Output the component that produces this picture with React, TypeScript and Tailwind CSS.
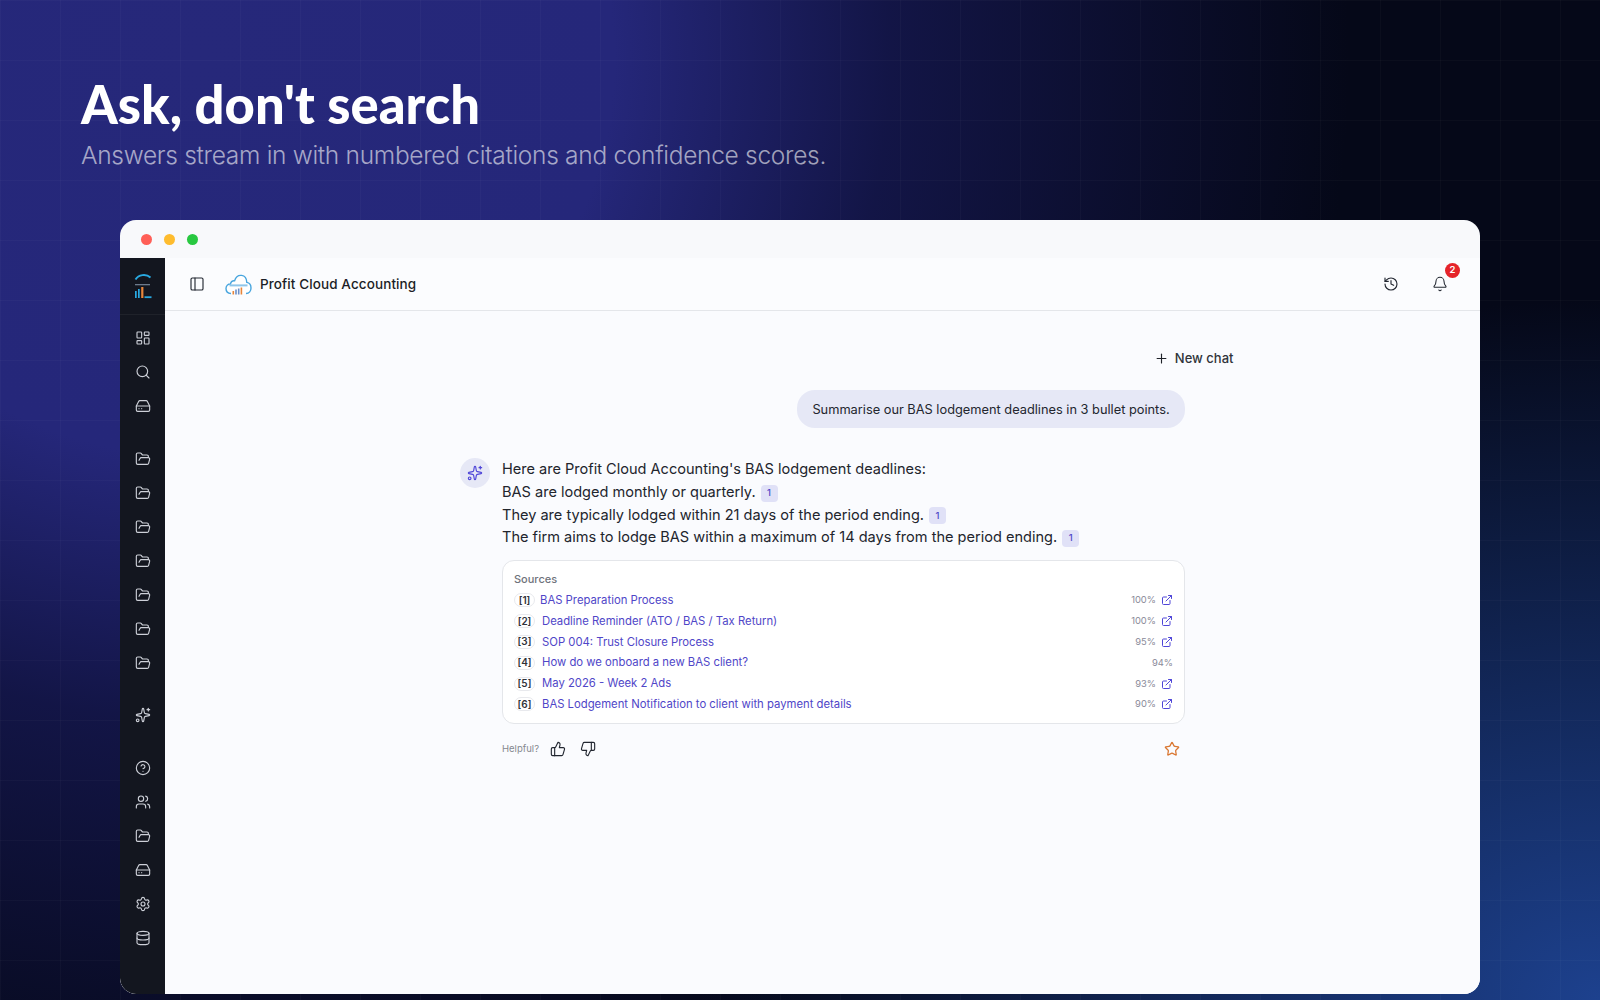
import React from "react";
import {
  LayoutDashboard, Search, HardDrive, FolderOpen, Sparkles, CircleHelp, Users, Settings, Database,
  PanelLeft, History, Bell, Plus, ExternalLink, ThumbsUp, ThumbsDown, Star,
} from "lucide-react";

function SideItem({ icon: Icon }: { icon: React.ComponentType<any> }) {
  return (
    <div className="h-[34px] flex items-center justify-center text-[#cdd0d8]">
      <Icon size={16} strokeWidth={1.7} />
    </div>
  );
}

function SideLogo() {
  return (
    <svg width="20" height="26" viewBox="0 0 20 26" fill="none">
      <path d="M2.5 6.5 C5.5 1.5 13 0.5 17.5 4.5" stroke="#29a9e1" strokeWidth="1.9" fill="none" />
      <rect x="2" y="11" width="15" height="1.3" fill="#6c7a8c" />
      <rect x="2" y="18" width="1.7" height="7" fill="#29a9e1" />
      <rect x="5" y="16" width="1.7" height="9" fill="#29a9e1" />
      <rect x="8.2" y="14" width="2.2" height="11" fill="#e8853a" />
      <path d="M11.5 24.2 H18.5" stroke="#29a9e1" strokeWidth="1.8" />
    </svg>
  );
}

function CloudLogo() {
  return (
    <svg width="27" height="21" viewBox="0 0 27 21" fill="none">
      <path d="M6 19.5 C2.5 19.5 1 17 1 14.6 C1 11.8 3 10 5.5 10 C5.8 7.6 7.6 6.4 9.6 6.8 C10.8 3 13.6 1 16.6 1.4 C19.8 1.8 21.6 4.6 21.8 8.4 C24.4 8.8 26 11 26 14 C26 17 24.2 19.5 21 19.5"
        stroke="#47a5de" strokeWidth="1.4" fill="#ffffff" />
      <rect x="4.5" y="10.4" width="18" height="2" fill="#8fc6ea" />
      <rect x="7.5" y="17" width="1.6" height="3.5" fill="#e8853a" />
      <rect x="10.2" y="15.5" width="1.6" height="5" fill="#6b8fc9" />
      <rect x="12.9" y="14.5" width="1.6" height="6" fill="#6b8fc9" />
      <rect x="15.6" y="13.5" width="1.6" height="7" fill="#e8853a" />
    </svg>
  );
}

function Cite() {
  return (
    <span className="inline-flex items-center justify-center w-[17px] h-[17px] ml-[5px] rounded-[4px] bg-[#e0e1f7] text-[#4f46c8] text-[9.5px] font-medium align-[1px]">
      1
    </span>
  );
}

const sources: [string, string, string, boolean][] = [
  ["1", "BAS Preparation Process", "100%", true],
  ["2", "Deadline Reminder (ATO / BAS / Tax Return)", "100%", true],
  ["3", "SOP 004: Trust Closure Process", "95%", true],
  ["4", "How do we onboard a new BAS client?", "94%", false],
  ["5", "May 2026 - Week 2 Ads", "93%", true],
  ["6", "BAS Lodgement Notification to client with payment details", "90%", true],
];

export default function App() {
  return (
    <div className="relative w-[1600px] h-[1000px] overflow-hidden bg-[#050818] font-['Inter',sans-serif] [background-image:linear-gradient(rgba(255,255,255,0.025)_1px,transparent_1px),linear-gradient(90deg,rgba(255,255,255,0.025)_1px,transparent_1px),radial-gradient(ellipse_900px_700px_at_1600px_1000px,#1d418e_0%,rgba(29,65,142,0.55)_45%,transparent_100%),radial-gradient(ellipse_1150px_1100px_at_200px_60px,#26287a_0%,#25277a_36%,rgba(26,28,95,0.65)_60%,transparent_100%)] [background-size:60px_60px,60px_60px,100%_100%,100%_100%]">
      <div className="pl-[81px] pt-[72px] h-[220px]">
        <h1 className="font-['Lato',sans-serif] font-black text-white text-[52.5px] leading-[64px]">
          Ask, don't search
        </h1>
        <p className="text-[24.5px] leading-[34px] mt-[2px] font-light text-white/60 tracking-[-0.3px]">
          Answers stream in with numbered citations and confidence scores.
        </p>
      </div>

      <div className="ml-[120px] w-[1360px] h-[774px] rounded-2xl overflow-hidden bg-[#f8f9fb] flex flex-col">
        <div className="h-[38px] shrink-0 flex items-center gap-[12px] pl-[21px]">
          <span className="w-[11px] h-[11px] rounded-full bg-[#ff5f57]" />
          <span className="w-[11px] h-[11px] rounded-full bg-[#febc2e]" />
          <span className="w-[11px] h-[11px] rounded-full bg-[#28c840]" />
        </div>
        <div className="flex-1 flex min-h-0">
          <aside className="w-[45px] shrink-0 bg-[#13161f] rounded-bl-2xl flex flex-col">
            <div className="h-[57px] shrink-0 flex items-center justify-center border-b border-white/5">
              <SideLogo />
            </div>
            <div className="pt-[6px] flex flex-col gap-[18.5px]">
              <div className="flex flex-col">
                <SideItem icon={LayoutDashboard} />
                <SideItem icon={Search} />
                <SideItem icon={HardDrive} />
              </div>
              <div className="flex flex-col">
                {Array.from({ length: 7 }).map((_, i) => (
                  <SideItem key={i} icon={FolderOpen} />
                ))}
              </div>
              <div className="flex flex-col">
                <SideItem icon={Sparkles} />
              </div>
              <div className="flex flex-col">
                <SideItem icon={CircleHelp} />
                <SideItem icon={Users} />
                <SideItem icon={FolderOpen} />
                <SideItem icon={HardDrive} />
                <SideItem icon={Settings} />
                <SideItem icon={Database} />
              </div>
            </div>
          </aside>

          <div className="flex-1 flex flex-col min-w-0 bg-[#fafbfe]">
            <header className="h-[53px] shrink-0 flex items-center border-b border-[#e4e6ea] bg-[#fbfcfe] pl-[24px] pr-[32px]">
              <PanelLeft size={16} strokeWidth={1.7} className="text-[#222731]" />
              <div className="ml-[20px]"><CloudLogo /></div>
              <span className="ml-[8px] text-[13.5px] font-medium text-[#1b1e26] tracking-[0.1px]">Profit Cloud Accounting</span>
              <div className="ml-auto flex items-center gap-[33px]">
                <History size={16} strokeWidth={1.7} className="text-[#222731]" />
                <div className="relative">
                  <Bell size={16} strokeWidth={1.6} className="text-[#222731]" />
                  <span className="absolute top-[-13px] left-[13px] w-[15px] h-[15px] rounded-full bg-[#e5242a] text-white text-[9.5px] font-semibold flex items-center justify-center">2</span>
                </div>
              </div>
            </header>

            <main className="flex-1 flex flex-col items-center pt-[35px]">
              <div className="w-[824px] flex justify-end items-center gap-[6px] h-[24px] pr-[1px] text-[#1f2229]">
                <Plus size={15} strokeWidth={1.8} />
                <span className="text-[13px] font-medium text-[#30333a] mt-[1px]">New chat</span>
              </div>
              <div className="w-[725px] flex flex-col mt-[20px]">
                <div className="flex justify-end">
                  <div className="h-[38px] w-[388px] pt-[1px] rounded-[18px] bg-[#e6e8f6] flex items-center justify-center text-[12.8px] text-[#23262e] whitespace-nowrap">
                    Summarise our BAS lodgement deadlines in 3 bullet points.
                  </div>
                </div>
                <div className="flex mt-[30px]">
                  <div className="w-[30px] h-[30px] shrink-0 rounded-full bg-[#e6e8f6] flex items-center justify-center text-[#4f46d8]">
                    <Sparkles size={16} strokeWidth={1.7} />
                  </div>
                  <div className="ml-[12px] flex-1 min-w-0">
                    <div className="text-[14.55px] leading-[22.75px] text-[#22252d]">
                      <div className="h-[22.75px]">Here are Profit Cloud Accounting's BAS lodgement deadlines:</div>
                      <div className="h-[22.75px]">BAS are lodged monthly or quarterly.<Cite /></div>
                      <div className="h-[22.75px]">They are typically lodged within 21 days of the period ending.<Cite /></div>
                      <div className="h-[22.75px]">The firm aims to lodge BAS within a maximum of 14 days from the period ending.<Cite /></div>
                    </div>
                    <div className="mt-[11px] h-[164px] rounded-xl border border-[#e4e6ea] bg-white px-[11px] pt-[10px]">
                      <div className="text-[11px] leading-[17px] font-medium text-[#6f737c]">Sources</div>
                      <div className="flex flex-col mt-[2px]">
                        {sources.map(([n, title, pct, link]) => (
                          <div key={n} className="h-[20.8px] flex items-center">
                            <span className="w-[21px] h-[14px] rounded-full border border-[#e8e9ed] flex items-center justify-center text-[10px] font-semibold text-[#30333a]">[{n}]</span>
                            <span className={`${n === "1" ? "ml-[5px]" : "ml-[7px]"} text-[11.3px] text-[#4f46c8] whitespace-nowrap`}>{title}</span>
                            <span className="ml-auto text-[9.4px] text-[#8a8a99]">{pct}</span>
                            {link && <ExternalLink size={12} strokeWidth={2} className="ml-[5px] text-[#4f46d8]" />}
                          </div>
                        ))}
                      </div>
                    </div>
                    <div className="flex items-center h-[24px] mt-[13px]">
                      <span className="text-[9.5px] text-[#85888f] w-[48px] mt-[1px]">Helpful?</span>
                      <ThumbsUp size={16} strokeWidth={1.7} className="text-[#222731]" />
                      <ThumbsDown size={16} strokeWidth={1.7} className="ml-[14px] text-[#222731]" />
                      <Star size={16} strokeWidth={1.9} className="ml-auto mr-[5px] text-[#d97732]" />
                    </div>
                  </div>
                </div>
              </div>
            </main>
          </div>
        </div>
      </div>
    </div>
  );
}
